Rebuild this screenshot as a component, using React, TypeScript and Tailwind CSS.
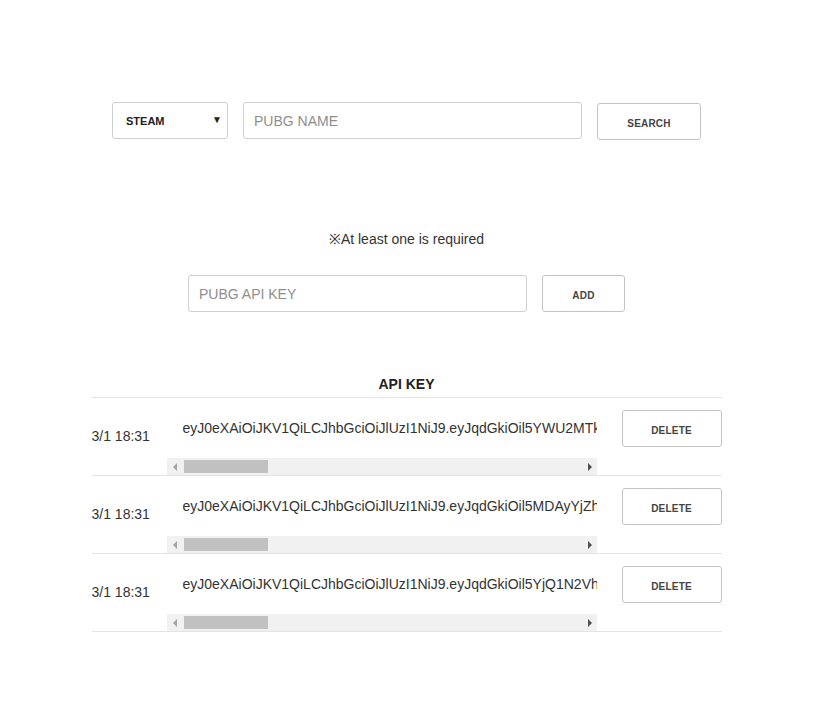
import { useState } from "react";

const KEYS = [
  "eyJ0eXAiOiJKV1QiLCJhbGciOiJlUzI1NiJ9.eyJqdGkiOil5YWU2MTk0MC1hZjYzLTAxMzctZDY5Ny0wMjJiYzRlYTY1MjEiLCJpc3MiOiJnYW1lbG9ja2VyIn0",
  "eyJ0eXAiOiJKV1QiLCJhbGciOiJlUzI1NiJ9.eyJqdGkiOil5MDAyYjZhMC1hZjYzLTAxMzctZDY5Ny0wMjJiYzRlYTY1MjEiLCJpc3MiOiJnYW1lbG9ja2VyIn0",
  "eyJ0eXAiOiJKV1QiLCJhbGciOiJlUzI1NiJ9.eyJqdGkiOil5YjQ1N2VhMC1hZjYzLTAxMzctZDY5Ny0wMjJiYzRlYTY1MjEiLCJpc3MiOiJnYW1lbG9ja2VyIn0",
];

function FakeScrollbar() {
  return (
    <div className="mt-auto flex h-[17px] w-full items-center bg-[#f1f1f1]">
      <svg className="ml-[6px] h-[8px] w-[4px]" viewBox="0 0 4 8">
        <path d="M4 0 L0 4 L4 8 Z" fill="#a3a3a3" />
      </svg>
      <div className="ml-[7px] h-[13px] w-[84px] bg-[#c1c1c1]" />
      <div className="flex-1" />
      <svg className="mr-[5px] h-[8px] w-[4px]" viewBox="0 0 4 8">
        <path d="M0 0 L4 4 L0 8 Z" fill="#505050" />
      </svg>
    </div>
  );
}

export default function App() {
  const [platform, setPlatform] = useState("steam");
  const [name, setName] = useState("");
  const [apiKey, setApiKey] = useState("");
  const [keys, setKeys] = useState(KEYS);

  const btn =
    "rounded-[3px] border border-[#c4c4c4] bg-white pt-[3px] text-[10px] font-bold text-[#444] tracking-[0.2px]";
  const input =
    "h-[37px] rounded-[3px] border border-[#cfcfcf] bg-white px-[10px] text-[14px] text-[#333] placeholder:text-[#8e8e8e] focus:outline-none";

  return (
    <div className="min-h-[708px] w-full bg-white font-['Liberation_Sans',Arial,sans-serif] text-[#333]">
      <div className="flex w-[813px] flex-col items-center pt-[102px]">
        {/* search row */}
        <div className="flex items-start gap-[15px]">
          <div className="relative h-[37px] w-[116px] rounded-[3px] border border-[#cfcfcf]">
            <select
              value={platform}
              onChange={(e) => setPlatform(e.target.value)}
              className="h-full w-full appearance-none bg-transparent pl-[13px] pt-[2px] text-[11px] font-bold text-[#222] focus:outline-none"
            >
              <option value="steam">STEAM</option>
              <option value="kakao">KAKAO</option>
            </select>
            <span className="pointer-events-none absolute right-[5px] top-[11px] text-[10px] leading-[12px] text-[#222]">
              ▼
            </span>
          </div>
          <input
            value={name}
            onChange={(e) => setName(e.target.value)}
            placeholder="PUBG NAME"
            className={`${input} w-[339px]`}
          />
          <button className={`${btn} mt-px h-[37px] w-[104px]`}>SEARCH</button>
        </div>

        <p className="mt-[89px] text-[14px] leading-5 text-[#333]">
          ※At least one is required
        </p>

        {/* api key row */}
        <div className="mt-[26px] flex items-start gap-[15px]">
          <input
            value={apiKey}
            onChange={(e) => setApiKey(e.target.value)}
            placeholder="PUBG API KEY"
            className={`${input} w-[339px]`}
          />
          <button
            onClick={() => {
              if (apiKey) {
                setKeys([...keys, apiKey]);
                setApiKey("");
              }
            }}
            className={`${btn} h-[37px] w-[83px]`}
          >
            ADD
          </button>
        </div>

        {/* table */}
        <div className="mt-[60px] w-[630px]">
          <div className="flex h-[26px] items-center justify-center border-b border-[#e3e3e3] text-[14px] font-bold text-[#222]">
            API KEY
          </div>
          {keys.map((k, i) => (
            <div
              key={i}
              className="flex h-[78px] items-stretch border-b border-[#e3e3e3]"
            >
              <div className="flex w-[75px] items-center text-[14px] text-[#333]">
                3/1 18:31
              </div>
              <div className="flex w-[430px] flex-col">
                <div className="overflow-hidden whitespace-nowrap pl-[16px] pt-[20px] text-[14px] leading-5 text-[#333]">
                  {k}
                </div>
                <FakeScrollbar />
              </div>
              <div className="ml-[25px] pt-[12px]">
                <button
                  onClick={() => setKeys(keys.filter((_, j) => j !== i))}
                  className={`${btn} h-[37px] w-[100px]`}
                >
                  DELETE
                </button>
              </div>
            </div>
          ))}
        </div>
      </div>
    </div>
  );
}
